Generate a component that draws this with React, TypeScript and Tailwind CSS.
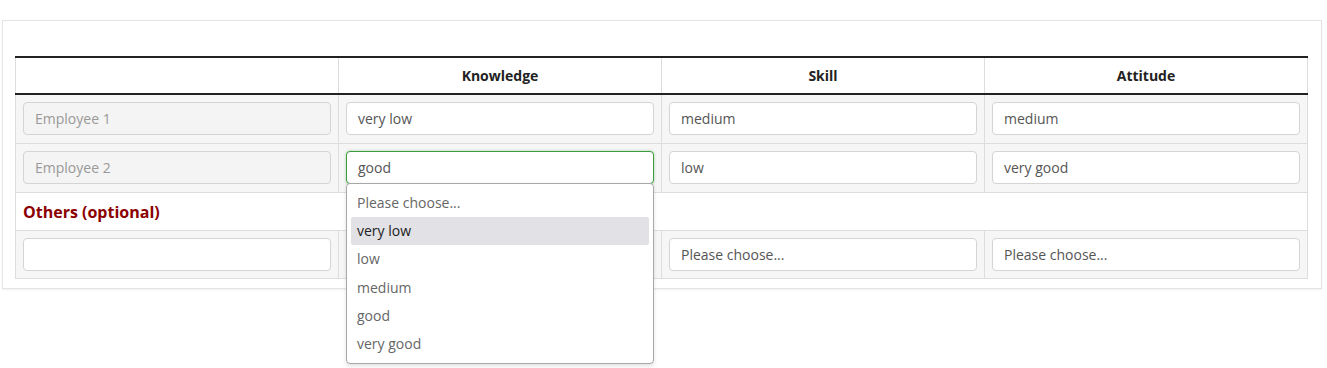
const LEVELS = ["very low", "low", "medium", "good", "very good"];

const inputBase =
  "block w-full h-[33px] rounded-[4px] border px-[11px] text-[14px] leading-[31px] text-[#555]";

function Field({
  value,
  disabled,
  focused,
}: {
  value: string;
  disabled?: boolean;
  focused?: boolean;
}) {
  if (disabled) {
    return <div className={`${inputBase} border-[#d4d4d4] bg-[#f4f4f4] text-[#999]`}>{value}</div>;
  }
  if (focused) {
    return (
      <div className={`${inputBase} border-[#3e9b3e] bg-white shadow-[0_0_3px_rgba(60,150,60,0.45)]`}>
        {value}
      </div>
    );
  }
  return <div className={`${inputBase} border-[#d4d4d4] bg-white`}>{value}</div>;
}

function Dropdown() {
  return (
    <div className="absolute left-[7px] top-[39px] z-10 w-[308px] rounded-[4px] border border-[#a8a8a8] bg-white px-[4px] pt-[5px] pb-[5px] shadow-[0_2px_4px_rgba(0,0,0,0.12)]">
      <div className="h-[28px] px-[6px] text-[14px] leading-7 text-[#666]">Please choose...</div>
      {LEVELS.map((l, i) => (
        <div
          key={l}
          className={`h-[28.3px] rounded-[2px] px-[6px] text-[14px] leading-[28px] ${
            i === 0 ? "bg-[#e1e1e6] text-[#222]" : "text-[#666]"
          }`}
        >
          {l}
        </div>
      ))}
    </div>
  );
}

export default function App() {
  const rows = [
    { name: "Employee 1", k: "very low", s: "medium", a: "medium" },
    { name: "Employee 2", k: "good", s: "low", a: "very good" },
  ];
  const cell = "border border-[#ddd] px-[7px] pt-[7px] pb-[8px]";

  return (
    <div className="min-h-screen bg-white pt-5 pl-[2px] font-['Open_Sans','Noto_Sans',sans-serif]">
      <div className="w-[1320px] border border-[#e4e4e4] px-3 pt-[35px] pb-[9px] shadow-[0_1px_2px_rgba(0,0,0,0.06)]">
        <table className="w-[1293px] table-fixed border-collapse">
          <thead>
            <tr className="h-[37px] border-t-2 border-b-2 border-[#222]">
              <th className="border-x border-[#ddd]"></th>
              <th className="border-x border-[#ddd] text-center text-[14px] font-bold text-[#222]">Knowledge</th>
              <th className="border-x border-[#ddd] text-center text-[14px] font-bold text-[#222]">Skill</th>
              <th className="border-x border-[#ddd] text-center text-[14px] font-bold text-[#222]">Attitude</th>
            </tr>
          </thead>
          <tbody>
            {rows.map((r, idx) => (
              <tr key={r.name} className="bg-[#f6f6f6]">
                <td className={cell}>
                  <Field value={r.name} disabled />
                </td>
                <td className={`relative ${cell}`}>
                  <Field value={r.k} focused={idx === 1} />
                  {idx === 1 && <Dropdown />}
                </td>
                <td className={cell}>
                  <Field value={r.s} />
                </td>
                <td className={cell}>
                  <Field value={r.a} />
                </td>
              </tr>
            ))}
            <tr className="bg-white">
              <td colSpan={4} className="h-[38px] border border-[#ddd] px-[7px] text-[16px] font-bold text-[#8b0000]">
                Others (optional)
              </td>
            </tr>
            <tr className="bg-[#f6f6f6]">
              <td className="border border-[#ddd] p-[7px]">
                <Field value="" />
              </td>
              <td className="border border-[#ddd] p-[7px]">
                <Field value="Please choose..." />
              </td>
              <td className="border border-[#ddd] p-[7px]">
                <Field value="Please choose..." />
              </td>
              <td className="border border-[#ddd] p-[7px]">
                <Field value="Please choose..." />
              </td>
            </tr>
          </tbody>
        </table>
      </div>
    </div>
  );
}
